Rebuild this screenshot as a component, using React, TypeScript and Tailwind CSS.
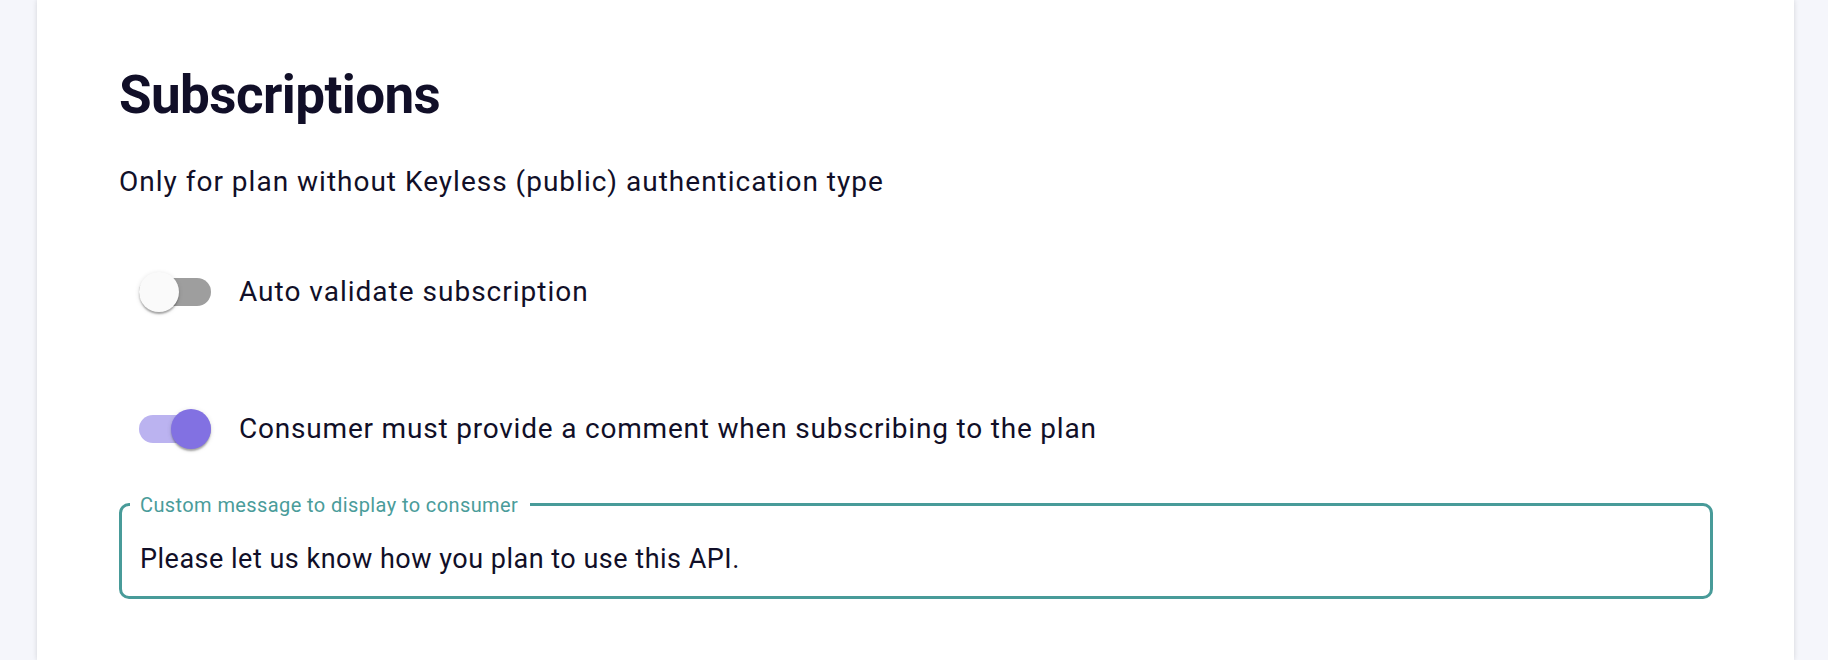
import React from "react";

function Toggle({ on }: { on: boolean }) {
  return (
    <div className="relative h-[40px] w-[72px] shrink-0 flex items-center">
      <div className={on ? "h-[28px] w-[72px] rounded-full bg-[#bbb3f0]" : "h-[28px] w-[72px] rounded-full bg-[#9e9e9e]"} />
      <div
        className={
          on
            ? "absolute right-0 top-0 h-[40px] w-[40px] rounded-full bg-[#8271e2] shadow-[0_3px_2px_-1px_rgba(0,0,0,0.2),0_2px_2px_0_rgba(0,0,0,0.14),0_1px_5px_0_rgba(0,0,0,0.12)]"
            : "absolute left-0 top-0 h-[40px] w-[40px] rounded-full bg-[#fafafa] shadow-[0_3px_2px_-1px_rgba(0,0,0,0.2),0_2px_2px_0_rgba(0,0,0,0.14),0_1px_5px_0_rgba(0,0,0,0.12)]"
        }
      />
    </div>
  );
}

export default function App() {
  const font = { fontFamily: "Roboto, 'Noto Sans', sans-serif" };
  return (
    <div className="flex h-[660px] w-full overflow-hidden bg-[#f5f6fb] pl-[37px] pr-[34px]" style={font}>
      <div className="flex-1 bg-white shadow-[0_0_5px_rgba(0,0,0,0.14)] pl-[82px] pr-[81px] pt-[63px] text-[#110f28]">
        <h1 className="text-[53px] leading-[64px] font-bold tracking-[-0.6px]">Subscriptions</h1>
        <p className="mt-[35px] text-[28px] leading-[40px] tracking-[1px]">
          Only for plan without Keyless (public) authentication type
        </p>
        <div className="mt-[70px] ml-[20px] flex items-center gap-[28px]">
          <Toggle on={false} />
          <span className="text-[28px] leading-[40px] tracking-[1px]">Auto validate subscription</span>
        </div>
        <div className="mt-[97px] ml-[20px] flex items-center gap-[28px]">
          <Toggle on={true} />
          <span className="text-[28px] leading-[40px] tracking-[0.8px]">
            Consumer must provide a comment when subscribing to the plan
          </span>
        </div>
        <div className="relative mt-[54px] h-[96px] rounded-[10px] border-[3px] border-[#489b99] pl-[18px] pt-[36px]">
          <span className="absolute left-[8px] top-[-12px] bg-white pl-[10px] pr-[12px] text-[20px] leading-[22px] tracking-[0.4px] text-[#4a9c9a]">
            Custom message to display to consumer
          </span>
          <div className="text-[27px] leading-[34px] tracking-[0.5px]">Please let us know how you plan to use this API.</div>
        </div>
      </div>
    </div>
  );
}
